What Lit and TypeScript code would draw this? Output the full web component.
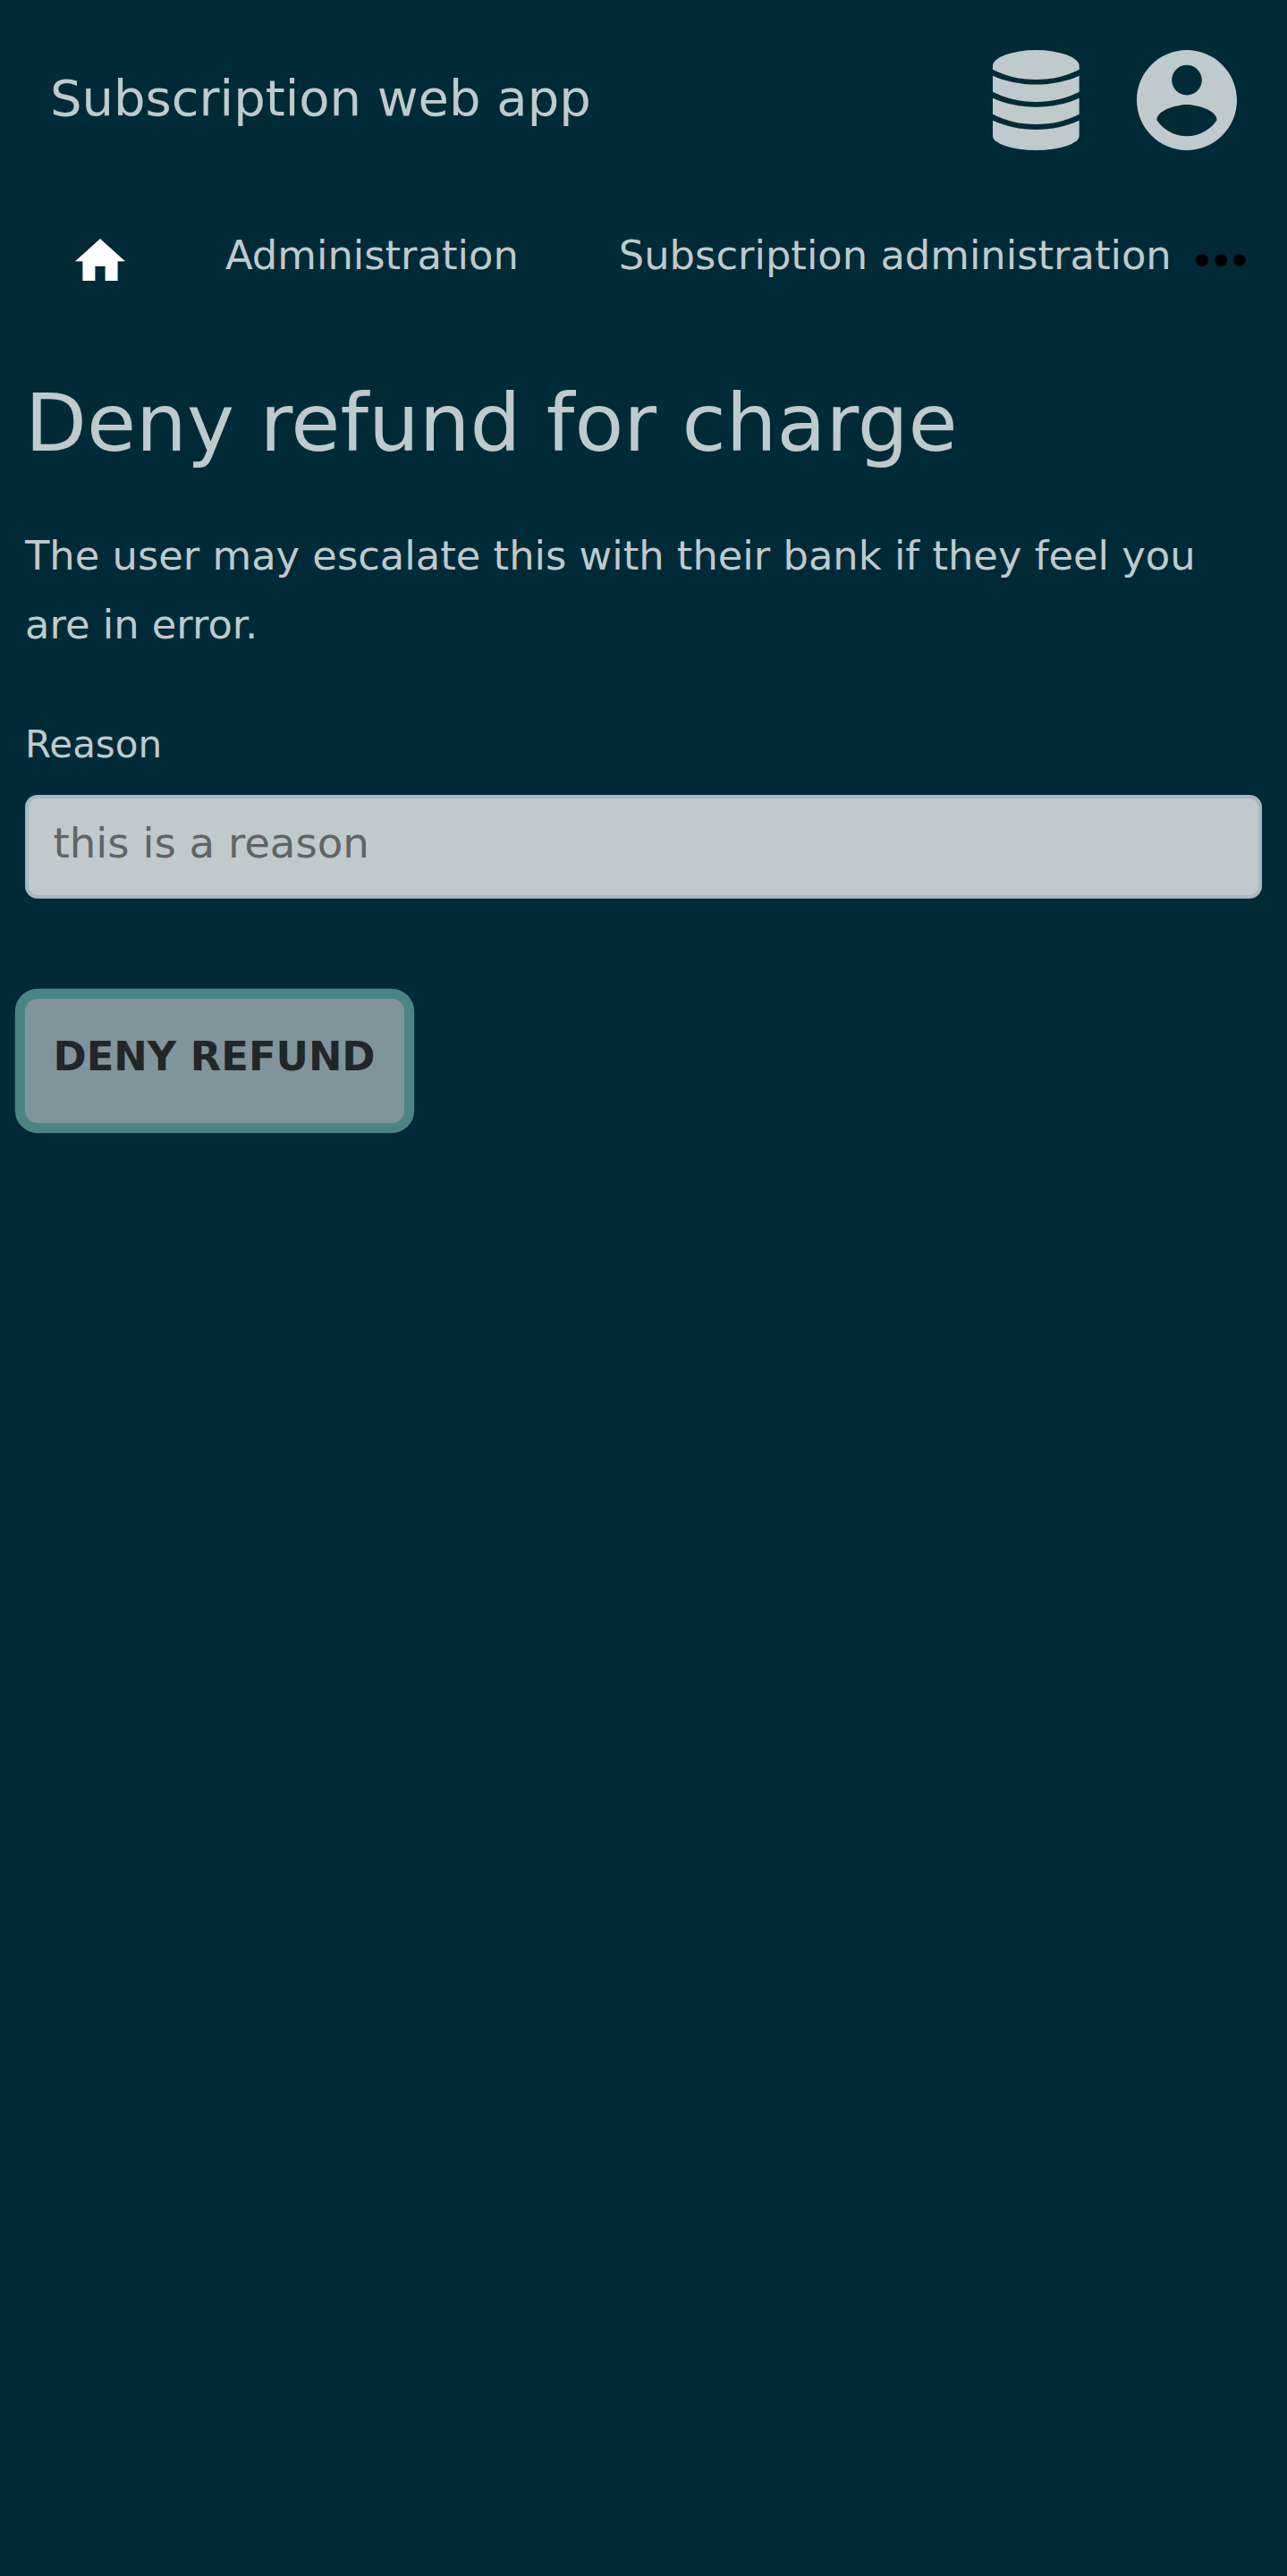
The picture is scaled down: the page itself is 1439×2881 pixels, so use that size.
import { LitElement, html, css, svg } from "lit";
import { customElement } from "lit/decorators.js";

const databaseIcon = html`
  <svg class="icon-db" viewBox="0 0 98 112" aria-hidden="true">
    <path d="M0 18A48.350 18 0 0 1 96.700 18V21.700C83 29 66 33 48.350 33S14 29 0 21.700Z" />
    <path d="M0 28.700C14 35 31 38.500 48.350 38.500S83 35 96.700 28.700V46.700C83 54 66 57.900 48.350 57.900S14 54 0 46.700Z" />
    <path d="M0 53.700C14 60 31 63.700 48.350 63.700S83 60 96.700 53.700V71.700C83 79 66 83 48.350 83S14 79 0 71.700Z" />
    <path d="M0 78.700C14 85 31 88.900 48.350 88.900S83 85 96.700 78.700V96A48.350 16 0 0 1 0 96Z" />
  </svg>
`;

const accountIcon = html`
  <svg class="icon-user" viewBox="2 2 20 20" aria-hidden="true">
    <path d="M12 2C6.480 2 2 6.480 2 12s4.480 10 10 10 10-4.480 10-10S17.520 2 12 2zm0 3c1.660 0 3 1.340 3 3s-1.340 3-3 3-3-1.340-3-3 1.340-3 3-3zm0 14.200c-2.500 0-4.710-1.280-6-3.220.03-1.990 4-3.080 6-3.080 1.990 0 5.970 1.090 6 3.080-1.290 1.940-3.500 3.220-6 3.220z" />
  </svg>
`;

const homeIcon = html`
  <svg class="icon-home" viewBox="2 3 20 17" aria-hidden="true">
    <path d="M10 20v-6h4v6h5v-8h3L12 3 2 12h3v8z" />
  </svg>
`;

const moreIcon = html`
  <svg class="icon-more" viewBox="0 0 56 14" aria-hidden="true">
    ${[7, 28, 49].map((cx) => svg`<circle cx=${cx} cy="7" r="7" />`)}
  </svg>
`;

@customElement("app-root")
export class AppRoot extends LitElement {
  static styles = css`
    :host {
      display: block;
      box-sizing: border-box;
      min-height: 100vh;
      background: #002b36;
      color: #bfcacd;
      font-family: "DejaVu Sans", sans-serif;
      font-size: 44.8px;
      line-height: 77px;
    }
    svg {
      display: block;
      flex: none;
      fill: currentColor;
    }
    .header {
      display: flex;
      align-items: center;
      height: 112px;
      padding: 56px 56.300px 56px 56px;
    }
    .title {
      flex: 1;
      font-size: 56px;
      line-height: 113px;
      margin-top: -5px;
    }
    .icon-db {
      width: 98px;
      height: 112px;
      margin-right: 62.700px;
    }
    .icon-user {
      width: 112px;
      height: 112px;
    }
    .nav {
      display: flex;
      height: 101px;
      padding: 11px 46px 0 84px;
      align-items: center;
      white-space: nowrap;
    }
    .icon-home {
      width: 56px;
      height: 47.600px;
      margin: 10px 112px 0 0;
      color: #fff;
    }
    .link {
      margin-right: 112px;
    }
    .link-last {
      margin-right: auto;
    }
    .icon-more {
      width: 56px;
      height: 14px;
      margin-top: 10px;
      color: #000;
    }
    .main {
      padding: 0 28px;
    }
    .heading {
      margin: 0;
      padding-top: 81px;
      font-size: 89.600px;
      line-height: 112px;
      font-weight: 400;
    }
    .text {
      margin: 54px 0 0;
    }
    .label {
      display: block;
      margin-top: 57px;
      font-size: 42px;
    }
    .field {
      display: block;
      box-sizing: border-box;
      width: 100%;
      height: 115.500px;
      margin-top: 18px;
      padding: 0 27.500px 8px;
      border: 4px solid #a9b6c3;
      border-radius: 14px;
      background: #bfcacc;
      color: #5f6566;
      font-family: inherit;
      font-size: 46.667px;
      outline: none;
    }
    .button {
      display: block;
      height: 139.500px;
      margin-top: 112px;
      padding: 0 32px 10px 31.500px;
      border: 0;
      border-radius: 14px;
      background: #80959b;
      box-shadow: 0 0 0 11.200px #4a8583;
      color: #212728;
      font-family: inherit;
      font-size: 44.800px;
      font-weight: 700;
    }
  `;

  render() {
    return html`
      <header class="header">
        <div class="title">Subscription web app</div>
        ${databaseIcon}${accountIcon}
      </header>
      <nav class="nav">
        ${homeIcon}
        <span class="link">Administration</span>
        <span class="link-last">Subscription administration</span>
        ${moreIcon}
      </nav>
      <main class="main">
        <h1 class="heading">Deny refund for charge</h1>
        <p class="text">The user may escalate this with their bank if they feel you are in error.</p>
        <label class="label" for="reason">Reason</label>
        <input class="field" id="reason" type="text" .value=${"this is a reason"} />
        <button class="button" type="button">DENY REFUND</button>
      </main>
    `;
  }
}
